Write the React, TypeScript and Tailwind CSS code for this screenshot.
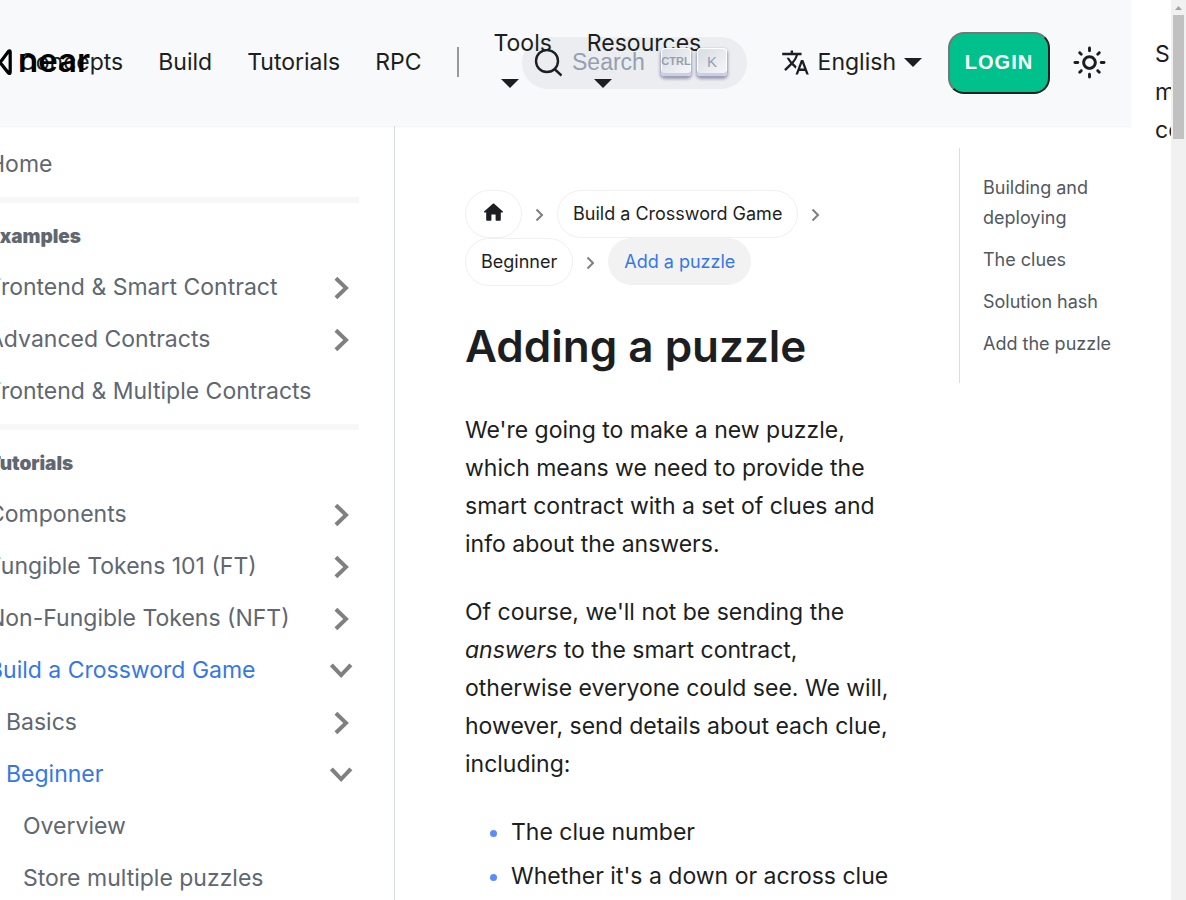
import React from 'react';

const navLinks = ['Concepts', 'Build', 'Tutorials', 'RPC'];

type Entry = { label: string; level?: number; state?: 'closed' | 'open' };

const examples: Entry[] = [
  { label: 'Frontend & Smart Contract', state: 'closed' },
  { label: 'Advanced Contracts', state: 'closed' },
  { label: 'Frontend & Multiple Contracts' },
];

const tutorials: Entry[] = [
  { label: 'Components', state: 'closed' },
  { label: 'Fungible Tokens 101 (FT)', state: 'closed' },
  { label: 'Non-Fungible Tokens (NFT)', state: 'closed' },
  { label: 'Build a Crossword Game', state: 'open' },
  { label: 'Basics', level: 1, state: 'closed' },
  { label: 'Beginner', level: 1, state: 'open' },
  { label: 'Overview', level: 2 },
  { label: 'Store multiple puzzles', level: 2 },
];

const indents = ['pl-0', 'pl-[18px]', 'pl-[35px]'];

function Caret() {
  return (
    <svg className="h-[9px] w-[18px]" viewBox="0 0 18 9" aria-hidden="true">
      <path d="M0 0h18L9 9z" fill="#1c1e21" />
    </svg>
  );
}

function Chevron({ open }: { open?: boolean }) {
  return (
    <svg className={open ? '-mr-[5px] size-[45px] rotate-90' : '-mr-[5px] size-[45px]'} viewBox="0 0 24 24" aria-hidden="true">
      <path d="M8.250 16.600 12.900 12.200 8.250 7.800 9.750 6.200l6.200 6-6.200 6z" fill="#808080" />
    </svg>
  );
}

function SmallChevron() {
  return (
    <svg className="mx-3 mt-[2px] h-[14px] w-[11px] shrink-0" viewBox="0 0 11 14" aria-hidden="true">
      <path d="M2.500 1.500 8 7l-5.500 5.500" fill="none" stroke="#7f7f7f" strokeWidth="2" />
    </svg>
  );
}

function MenuList({ items }: { items: Entry[] }) {
  return (
    <ul>
      {items.map((item) => (
        <li key={item.label} className={indents[item.level ?? 0]}>
          <a
            href="#"
            className={
              item.state === 'open'
                ? 'flex h-[52px] items-center justify-between whitespace-nowrap text-[#3578e5]'
                : 'flex h-[52px] items-center justify-between whitespace-nowrap'
            }
          >
            {item.label}
            {item.state && <Chevron open={item.state === 'open'} />}
          </a>
        </li>
      ))}
    </ul>
  );
}

const keyCap =
  'flex h-[28px] w-[30px] items-center justify-center rounded-[4px] bg-linear-to-br from-[#d5dbe4] to-[#f8f8f8] pb-[2px] leading-none text-[#969faf] shadow-[inset_0_-3px_0_0_#cdcde6,inset_0_0_1px_1px_#fff,0_2px_3px_1px_rgba(30,35,90,0.4)]';

function Header() {
  return (
    <header className="relative flex h-[126px] items-center bg-[#f7f9fb] pr-[24px] shadow-[0_1px_2px_0_rgba(0,0,0,0.05)]">
      <a href="#" className="absolute top-[37px] -left-[12px] flex h-[50px] items-center">
        <svg className="h-[26px] w-[24px]" viewBox="0 0 24 26" aria-hidden="true">
          <path
            d="M1.800 24V3.200q0-2 1.500-.6L20.500 24q1.700 1.300 1.700-1V3q0-2.200-1.900-.5L12.500 13"
            fill="none"
            stroke="#000"
            strokeWidth="3.200"
          />
        </svg>
        <span className="ml-[6px] pb-1 text-[33px] leading-none font-semibold text-black">near</span>
      </a>
      <nav className="flex items-center gap-[35px] pb-[2px] pl-[19px]">
        {navLinks.map((label) => (
          <a key={label} href="#">
            {label}
          </a>
        ))}
        <span className="h-[30px] w-[2px] bg-[#999]" />
        {['Tools', 'Resources'].map((label) => (
          <a key={label} href="#" className="relative z-10 flex flex-col">
            {label}
            <span className="flex h-[38px] items-center pt-[5px] pl-[7px]">
              <Caret />
            </span>
          </a>
        ))}
      </nav>
      <button type="button" className="absolute left-[522px] flex h-[52px] w-[225px] items-center rounded-full bg-[#ebedf0] pl-3">
        <svg className="size-[28px]" viewBox="0 0 28 28" aria-hidden="true">
          <circle cx="13" cy="12" r="11" fill="none" stroke="#1c1e21" strokeWidth="2.400" />
          <path d="M20.500 20 27.500 26.500" stroke="#1c1e21" strokeWidth="2.400" />
        </svg>
        <span className="ml-[10px] pb-[2px] font-['Liberation_Sans',sans-serif] text-[#969faf]">Search</span>
      </button>
      <span className="absolute left-[661px] z-20 flex gap-[6px] pb-[2px]">
        <kbd className={`${keyCap} font-['Liberation_Sans_Narrow','Liberation_Sans',sans-serif] text-[11px] font-bold`}>CTRL</kbd>
        <kbd className={`${keyCap} font-['Liberation_Sans',sans-serif] text-[15px]`}>K</kbd>
      </span>
      <div className="ml-auto flex items-center">
        <a href="#" className="flex items-center pb-[2px]">
          <svg className="mr-2 size-[29px]" viewBox="0 0 24 24" aria-hidden="true">
            <path
              fill="#1c1e21"
              d="M12.870 15.070l-2.540-2.510.03-.03c1.740-1.940 2.980-4.170 3.710-6.530H17V4h-7V2H8v2H1v1.990h11.170C11.500 7.920 10.440 9.750 9 11.350 8.070 10.320 7.300 9.190 6.690 8h-2c.73 1.630 1.730 3.170 2.980 4.560l-5.090 5.020L4 19l5-5 3.110 3.110.76-2.040zM18.500 10h-2L12 22h2l1.120-3h4.750L21 22h2l-4.500-12zm-2.620 7l1.620-4.330L19.120 17h-3.240z"
            />
          </svg>
          <span className="mr-2">English</span>
          <Caret />
        </a>
        <button
          type="button"
          className="ml-[26px] h-[62px] w-[102px] rounded-2xl border-2 border-t-[#767676] border-r-[#212121] border-b-[#212121] border-l-[#767676] bg-[#00c08b] pb-[2px] font-['Liberation_Sans',sans-serif] text-[20px] font-bold tracking-wider text-white"
        >
          LOGIN
        </button>
        <button type="button" aria-label="Switch theme" className="ml-[22px] pb-[2px]">
          <svg className="size-[35px]" viewBox="0 0 24 24" aria-hidden="true">
            <path
              fill="#1c1e21"
              d="M12,9c1.65,0,3,1.350,3,3s-1.350,3-3,3s-3-1.350-3-3S10.350,9,12,9 M12,7c-2.760,0-5,2.240-5,5s2.240,5,5,5s5-2.240,5-5 S14.760,7,12,7L12,7z M2,13l2,0c0.550,0,1-0.450,1-1s-0.450-1-1-1l-2,0c-0.550,0-1,0.450-1,1S1.450,13,2,13z M20,13l2,0c0.550,0,1-0.450,1-1 s-0.450-1-1-1l-2,0c-0.550,0-1,0.450-1,1S19.450,13,20,13z M11,2v2c0,0.550,0.450,1,1,1s1-0.450,1-1V2c0-0.550-0.450-1-1-1S11,1.450,11,2z M11,20v2c0,0.550,0.450,1,1,1s1-0.450,1-1v-2c0-0.550-0.450-1-1-1C11.450,19,11,19.450,11,20z M5.990,4.580c-0.390-0.390-1.030-0.390-1.410,0 c-0.390,0.390-0.390,1.030,0,1.410l1.060,1.060c0.390,0.390,1.030,0.390,1.410,0s0.390-1.030,0-1.410L5.990,4.580z M18.360,16.950 c-0.390-0.390-1.030-0.390-1.410,0c-0.390,0.390-0.390,1.030,0,1.410l1.060,1.060c0.390,0.390,1.030,0.390,1.410,0c0.390-0.390,0.390-1.030,0-1.410 L18.360,16.950z M19.420,5.990c0.390-0.390,0.390-1.030,0-1.410c-0.390-0.390-1.030-0.390-1.410,0l-1.060,1.060c-0.390,0.390-0.390,1.030,0,1.410 s1.030,0.390,1.410,0L19.420,5.990z M7.050,18.360c0.390-0.390,0.390-1.030,0-1.410c-0.390-0.390-1.030-0.390-1.410,0l-1.060,1.060 c-0.390,0.390-0.390,1.030,0,1.410s1.030,0.390,1.410,0L7.050,18.360z"
            />
          </svg>
        </button>
      </div>
    </header>
  );
}

const sectionTitle = 'mt-[15px] mb-[5px] text-[19px] leading-[38px] font-black';

function Sidebar() {
  return (
    <aside className="w-[395px] shrink-0 border-r border-[#dadde1] text-[#606770]">
      <div className="mr-[35px] -ml-3 pt-3">
        <a href="#" className="flex h-[52px] items-center">
          Home
        </a>
        <hr className="mt-[7px] border-t-[6px] border-[#f7f7f7]" />
        <h2 className={sectionTitle}>Examples</h2>
        <MenuList items={examples} />
        <hr className="mt-[7px] border-t-[6px] border-[#f7f7f7]" />
        <h2 className={sectionTitle}>Tutorials</h2>
        <MenuList items={tutorials} />
      </div>
    </aside>
  );
}

const pill = 'flex h-[48px] items-center rounded-full border border-[#f0f0f0] px-[15px] whitespace-nowrap';

function Article() {
  return (
    <main className="min-w-0 flex-1 pt-16 pr-[64px] pl-[70px]">
      <nav aria-label="Breadcrumbs">
        <ul className="flex flex-wrap text-[18px]">
          <li className="flex items-center">
            <a href="#" aria-label="Home" className={pill}>
              <svg className="mb-1 size-[25px]" viewBox="0 0 24 24" aria-hidden="true">
                <path d="M10 19v-5h4v5c0 .55.45 1 1 1h3c.55 0 1-.45 1-1v-7h1.700c.46 0 .68-.57.33-.87L12.670 3.600c-.38-.34-.96-.34-1.340 0l-8.360 7.530c-.34.3-.13.87.33.87H5v7c0 .55.45 1 1 1h3c.55 0 1-.45 1-1z" fill="#1c1e21" />
              </svg>
            </a>
            <SmallChevron />
          </li>
          <li className="flex items-center">
            <a href="#" className={pill}>
              Build a Crossword Game
            </a>
            <SmallChevron />
          </li>
          <li className="flex items-center">
            <a href="#" className={pill}>
              Beginner
            </a>
            <SmallChevron />
          </li>
          <li>
            <span className="flex h-[47px] items-center rounded-full bg-[#f2f2f2] px-4 whitespace-nowrap text-[#3578e5]">
              Add a puzzle
            </span>
          </li>
        </ul>
      </nav>
      <h1 className="mt-[31px] text-[44px] leading-[58px] font-semibold">Adding a puzzle</h1>
      <p className="mt-[36px]">
        We're going to make a new puzzle, which means we need to provide the smart contract with a set of clues and
        info about the answers.
      </p>
      <p className="mt-[30px]">
        Of course, we'll not be sending the <em>answers</em> to the smart contract, otherwise everyone could see. We
        will, however, send details about each clue, including:
      </p>
      <ul className="mt-[30px] -mr-8 list-disc space-y-[6px] pl-[46px] marker:text-[#5b8cff]">
        <li>The clue number</li>
        <li>Whether it's a down or across clue</li>
      </ul>
    </main>
  );
}

function Contents() {
  return (
    <aside className="w-[172px] shrink-0 pt-[22px]">
      <ul className="space-y-3 border-l border-[#dadde1] pt-[25px] pb-6 pl-[23px] text-[18px] leading-[30px] text-[#525860]">
        {['Building and deploying', 'The clues', 'Solution hash', 'Add the puzzle'].map((label) => (
          <li key={label}>
            <a href="#">{label}</a>
          </li>
        ))}
      </ul>
    </aside>
  );
}

export default function App() {
  return (
    <div className="flex h-screen overflow-hidden bg-white font-['Inter',sans-serif] text-[23px] leading-[38px] text-[#1c1e21]">
      <div className="min-w-0 flex-1">
        <Header />
        <div className="flex">
          <Sidebar />
          <Article />
          <Contents />
        </div>
      </div>
      <div className="w-10 shrink-0 overflow-hidden pt-[35px] pl-6">
        <a href="#" className="block w-20">
          Skip to main content
        </a>
      </div>
      <div className="w-[15px] shrink-0 bg-[#f1f1f1]" aria-hidden="true">
        <svg className="h-[15px] w-[15px]" viewBox="0 0 15 15">
          <path d="M4 10h7L7.500 6z" fill="#a3a3a3" />
        </svg>
        <div className="mx-[2px] h-[124px] bg-[#c1c1c1]" />
      </div>
    </div>
  );
}
